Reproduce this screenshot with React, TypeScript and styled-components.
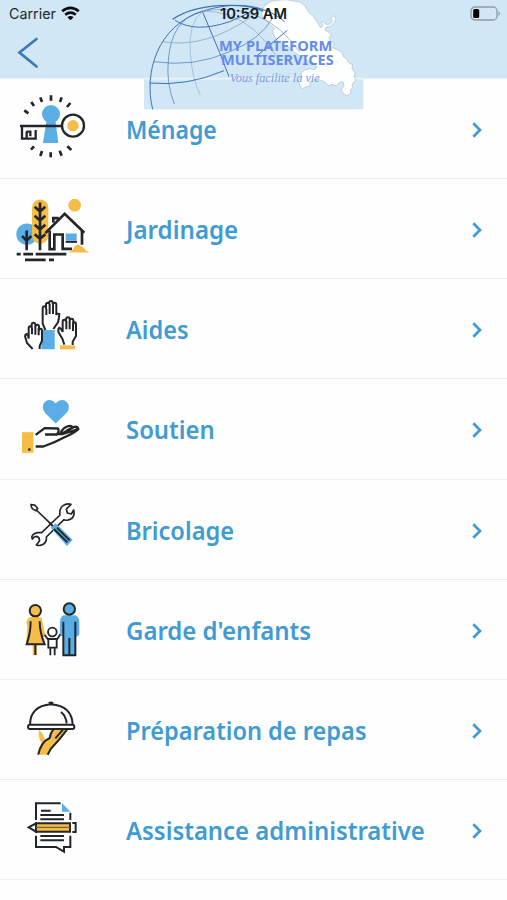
import React from "react";
import styled, { createGlobalStyle } from "styled-components";

const GlobalStyle = createGlobalStyle`
  * { box-sizing: border-box; }
  body { margin: 0; background: #fefefe; }
`;

const Screen = styled.div`
  width: 507px;
  height: 900px;
  overflow: hidden;
  background: #fefefe;
  font-family: "Noto Sans", sans-serif;
`;

const Header = styled.header`
  position: relative;
  height: 79px;
  background: #d1e7f6;
  border-bottom: 1px solid #e4eff7;
`;

const StatusBar = styled.div`
  position: relative;
  z-index: 2;
  display: grid;
  grid-template-columns: 1fr auto 1fr;
  align-items: center;
  height: 27px;
  padding: 0 6px 0 9px;
  font-family: Inter, sans-serif;
  color: #1c2830;
`;

const Carrier = styled.div`
  display: flex;
  align-items: center;
  gap: 5px;
  font-size: 14.3px;
`;

const Clock = styled.div`
  margin-right: 3px;
  font-size: 14.7px;
  font-weight: 600;
  color: #121a22;
`;

const Battery = styled.svg`
  justify-self: end;
  display: block;
`;

const BackButton = styled.button`
  display: block;
  margin: 9px 0 0 16px;
  padding: 0;
  border: 0;
  background: none;
  svg { display: block; }
`;

const Logo = styled.svg`
  position: absolute;
  z-index: 1;
  left: 140px;
  top: 0;
`;

const List = styled.ul`
  margin: 0;
  padding: 0;
  list-style: none;
`;

const Row = styled.li`
  display: grid;
  grid-template-columns: 126px 1fr 37px;
  align-items: center;
  height: 100.15px;
  border-bottom: 1px solid #ededed;
`;

const RowIcon = styled.svg`
  width: 100px;
  height: 100px;
  overflow: visible;
  fill: none;
  stroke: #22262b;
  stroke-width: 6;
`;

const Label = styled.span<{ $stretch: number }>`
  justify-self: start;
  font-size: 25px;
  line-height: 34px;
  font-weight: 600;
  color: #409bd2;
  white-space: nowrap;
  transform: scaleX(${(p) => p.$stretch});
  transform-origin: left center;
`;

const blue = "#5aaee5";
const yellow = "#f5bd48";

const Key = () => (
  <>
    <g stroke="none" fill={blue}>
      <circle cx="153" cy="87" r="27" />
      <path d="M140 105h26l9 69h-46z" />
    </g>
    <path strokeWidth="7" d="M60 123h126M66 123v38h41v-26M80 139v19M80 140h11v14" />
    <circle cx="219" cy="122" r="33" fill="#fefefe" strokeWidth="7" />
    <circle cx="219" cy="122" r="17" fill={yellow} stroke="none" />
    <path
      strokeWidth="8"
      d="M73 76l12 9M94 51l8 12M121 37l5 14M153 31v16M185 37l-5 14M211 54l-10 12M102 184l-9 10M126 198l-5 15M152 202v15M179 197l6 15M202 184l12 11"
    />
  </>
);

const Garden = () => (
  <>
    <g stroke="none">
      <circle cx="81" cy="148" r="32" fill={blue} />
      <rect x="96" y="44" width="49" height="132" rx="24" fill={yellow} />
      <circle cx="224" cy="61" r="19" fill={yellow} />
    </g>
    <path strokeWidth="8" d="M120 53v143M104 66l16 14 16-14M104 93l16 14 16-14M104 120l16 14 16-14M104 148l16 14 16-14M80 137v59M66 153l14 15 14-15" />
    <path fill="#fefefe" stroke="none" d="M153 126l41-38 52 46v59h-93z" />
    <path strokeWidth="8" d="M149 137v56h14v-44h25v43h28M246 138v42" />
    <path strokeWidth="8" d="M136 145l58-58 59 57M160 113v-13h16" />
    <path d="M197 146h33v21h-33z" fill={blue} stroke="none" />
    <path d="M197 171h34" />
    <path d="M203 203q14-3 21-18 7-10 18-2 11 4 16 15l12 5z" fill={yellow} stroke="none" />
    <path strokeWidth="8" d="M50 208h12M70 208h29M107 208h92M75 225h62M147 225h15" />
  </>
);

const Hands = () => (
  <>
    <path d="M126 121h38v58h-40z" fill={blue} stroke="none" />
    <path fill="#fefefe" d="M136 121l-8-19V57q0-7 6-7 4 0 4 7V44q0-5 6-5 3 0 3 5v-4q1-6 6-6 5 0 5 6v4q1-5 6-5 5 0 5 7v30q1-5 9-3-1 15-4 25l-14 20M139 57v19M149 42v31M159 42v31" />
    <path fill="#fefefe" d="M98 178l-17-18-6-20q0-6 5-7 6 6 6 14v-31q0-6 5-6 4 0 4 6v-10q0-7 6-7 5 0 5 7v6q1-7 6-7 5 0 5 7v11q0-6 5-6 4 0 4 7v29l-7 16v9M96 114v20M106 108v27M116 114v23" />
    <path fill="#fefefe" d="M193 165l-6-18-12-20q-1-12 4-13 7 6 9 13V96q0-6 5-6 5 0 5 6v-7q1-6 6-6 5 0 5 7v3q1-6 6-6 5 0 5 7v10q0-6 4-6 4 0 4 7v34l-10 17v10M199 94v25M209 92v27M219 98v26" />
    <path d="M180 167h45v12h-45z" fill={yellow} stroke="none" />
  </>
);

const Care = () => (
  <>
    <path d="M167 101L136 70C114 43 146 14 167 41 188 14 221 43 200 69z" fill={blue} stroke="none" />
    <path d="M66 127h34v62H66z" fill={yellow} stroke="none" />
    <circle cx="88" cy="179" r="4" fill="#22262b" stroke="none" />
    <path strokeWidth="7" strokeLinejoin="round" d="M107 135l27-20 40 1q5 5-3 18h-36M169 133h17l49-15M107 170h23q35-12 62-27 29-12 43-25-3-9-12-7l-37 20M181 131q8-20 27-23 10 1 12 8M195 129q5-8 15-12" />
  </>
);

const Tools = () => (
  <>
    <path d="M109 59l49 47" strokeWidth="5" />
    <path strokeWidth="5" strokeLinejoin="round" fill="#fefefe" d="M112 127h13l55-53q-3-20 9-28 11-8 24-4l-14 14 3 12 12 3 7-12q5 20-10 28-9 5-19 1l-53 52q2 14-8 21-11 7-22 3l9-12q2-11-8-14-8 0-13 8-6-13 15-19z" />
    <path d="M152 112l15-13 51 49-17 19z" fill={blue} stroke="none" />
    <path strokeWidth="6" d="M148 97l10 10M162 116l40 40M171 112l38 38" />
    <path strokeWidth="5" fill="#fefefe" d="M93 43l11 1 9 10-5 7q-15-5-15-18z" />
  </>
);

const Family = () => (
  <>
    <path d="M86 82q20-9 39 0l11 53-8 7 6 20h-23v33h-13v-33H78l4-50-3-18z" fill={yellow} stroke="none" />
    <path d="M190 75h37q11 7 11 20v37q-3 7-10 7v57h-39v-58q-9-1-9-7V94q1-14 10-19z" fill={blue} stroke="none" />
    <circle cx="106" cy="61" r="17" fill={yellow} />
    <circle cx="208" cy="56" r="17" fill={blue} />
    <path d="M92 93q0 34-12 69h54q-15-36-15-69M106 162v32M190 94v101h36V94M208 143v50" />
    <g strokeWidth="5.5">
      <circle cx="157" cy="125" r="13" fill="#fefefe" />
      <path d="M145 172v-26h25v26zM134 133l11 16M181 132l-11 17M151 172v23M164 172v23" />
    </g>
  </>
);

const Meal = () => (
  <>
    <path d="M117 118l13 16q4 18 12 21 6-20 18-37h41q-20 30-48 58l-10 18h-32q2-22 16-32-14-16-10-44z" fill={yellow} stroke="none" />
    <path strokeWidth="6" d="M90 104q1-56 63-61 63 5 65 61M183 66q15 12 17 34" />
    <path strokeWidth="7" d="M147 41q6-6 12 0" />
    <rect x="84" y="104" width="139" height="13" rx="6" fill="#fefefe" strokeWidth="6" />
    <path strokeWidth="6" d="M160 119q-8 8-11 25-27 13-34 50M201 119q-21 29-49 58l-9 17M189 119l-23 26" />
  </>
);

const Document = () => (
  <>
    <path d="M186 39l25 26h-25z" fill={blue} stroke="none" />
    <path d="M108 90V40h74M211 68v22M108 137v34h60l24 14v-14h19v-34M123 62h29M121 75h71M121 88h71M121 138h71M121 151h71" />
    <path fill={yellow} d="M108 100h102v25H108z" />
    <path fill="#fefefe" d="M108 100l-22 12 22 13z" />
    <path strokeWidth="4" d="M108 112h102" stroke="#7b6430" />
    <path d="M217 99h10v27h-10" />
  </>
);

const services = [
  { label: "Ménage", top: -18, stretch: 0.92, Icon: Key },
  { label: "Jardinage", top: -17.5, stretch: 0.965, Icon: Garden },
  { label: "Aides", top: -32, stretch: 0.94, Icon: Hands },
  { label: "Soutien", top: -32.5, stretch: 0.955, Icon: Care },
  { label: "Bricolage", top: -31, stretch: 0.945, Icon: Tools },
  { label: "Garde d'enfants", top: -31, stretch: 0.958, Icon: Family },
  { label: "Préparation de repas", top: -30, stretch: 0.943, Icon: Meal },
  { label: "Assistance administrative", top: -30, stretch: 0.956, Icon: Document },
];

const BrandLogo = () => (
  <Logo width="230" height="115" viewBox="0 0 690 345">
    <rect x="12" y="236" width="658" height="92" fill="#d1e7f6" />
    <path d="M12 236H670" stroke="#edf3f6" strokeWidth="5" />
    <path
      d="M365 34L374 17 393 4 412 1 438 -1 462 3 480 6 495 18 506 37 521 50 531 65 542 83 549 75 543 68 551 65 557 73 568 73 577 65 573 53 583 47 588 57 583 68 570 80 559 81 555 91 567 97 574 105 567 113 570 121 583 132 578 143 592 149 605 156 611 171 621 177 625 188 638 194 636 206 645 219 642 231 648 240 637 252 637 263 631 270 633 280 621 287 609 280 604 268 612 258 609 245 597 248 590 258 576 253 567 258 555 246 538 239 522 239 509 246 511 257 497 261 487 266 479 255 475 241 486 231 482 220 494 210 509 206 522 209 532 202 519 188 500 181 483 168 467 160 449 143 427 133 413 123 403 109 398 93 403 85 388 72 379 59 367 50Z"
      fill="#fdfefe"
      stroke="#afbec7"
      strokeWidth="2"
    />
    <g fill="none" stroke="#3c73b4" strokeWidth="3">
      <path d="M38 328C11 220 51 77 187 34 278 4 369 10 434 65" />
      <path d="M98 58Q150 22 240 17T370 34" strokeWidth="4" />
      <path d="M187 34Q95 55 85 180 78 250 103 312" strokeWidth="2" />
      <path d="M187 34Q143 70 151 160 157 240 181 285" stroke="#88b1d0" strokeWidth="2" />
      <path d="M187 34L239 158 267 230" />
      <path d="M187 34Q273 31 340 88 385 130 410 170" strokeWidth="2" stroke="#83aacd" />
      <path d="M187 34Q370 0 480 157" strokeWidth="2" stroke="#7d9bb8" />
      <path d="M105 61Q166 100 269 65 310 49 344 28" strokeWidth="3" />
      <path d="M66 125Q197 147 334 50" strokeWidth="2" stroke="#799fac" />
      <path d="M42 185Q161 203 269 155 360 119 398 54" strokeWidth="2" />
      <path d="M29 249Q140 260 252 212M350 168L442 91" strokeWidth="3" />
    </g>
    <g fill="#668ce9" fontFamily="Noto Sans, sans-serif" fontWeight="700" fontSize="40">
      <text x="237" y="154" textLength="340" lengthAdjust="spacingAndGlyphs">MY PLATEFORM</text>
      <text x="243" y="195" textLength="338" lengthAdjust="spacingAndGlyphs">MULTISERVICES</text>
    </g>
    <text
      x="269"
      y="245"
      fill="#789ce1"
      fontFamily="Z003, URW Chancery L, cursive"
      fontStyle="italic"
      fontSize="37"
      textLength="270"
      lengthAdjust="spacingAndGlyphs"
    >
      Vous facilite la vie
    </text>
  </Logo>
);

export default function App() {
  return (
    <>
      <GlobalStyle />
      <Screen>
        <Header>
          <StatusBar>
            <Carrier>
              Carrier
              <svg width="19" height="15" viewBox="0 0 19 15" fill="none" stroke="#080d12" strokeWidth="2.7">
                <path d="M1.2 5.3q8.3-6.8 16.6 0M4.2 8.7q5.3-4.2 10.6 0" />
                <path d="M6.4 11.2q3.1-2.4 6.2 0l-3.1 3z" fill="#080d12" stroke="none" />
              </svg>
            </Carrier>
            <Clock>10:59 AM</Clock>
            <Battery width="31" height="15" viewBox="0 0 31 15">
              <rect x="1" y="1" width="26" height="13" rx="4" fill="none" stroke="#8c9da9" strokeWidth="1.3" />
              <rect x="3.2" y="3" width="6" height="9" rx="1.5" fill="#000" />
              <path d="M28.5 5q3 2.5 0 5z" fill="#8c9da9" />
            </Battery>
          </StatusBar>
          <BackButton aria-label="Retour">
            <svg width="24" height="33" viewBox="0 0 24 33" fill="none" stroke="#4079bb" strokeWidth="2.8" strokeLinecap="round">
              <path d="M20.5 3L3.5 16.5l17 14" />
            </svg>
          </BackButton>
          <BrandLogo />
        </Header>
        <List>
          {services.map(({ label, top, stretch, Icon }) => (
            <Row key={label}>
              <RowIcon viewBox={`0 ${top} 300 300`}>
                <Icon />
              </RowIcon>
              <Label $stretch={stretch}>{label}</Label>
              <svg width="14" height="20" viewBox="0 0 14 20" fill="none" stroke="#409bd2" strokeWidth="2.7">
                <path d="M3.3 4.3L10 11l-6.7 6.7" />
              </svg>
            </Row>
          ))}
        </List>
      </Screen>
    </>
  );
}
